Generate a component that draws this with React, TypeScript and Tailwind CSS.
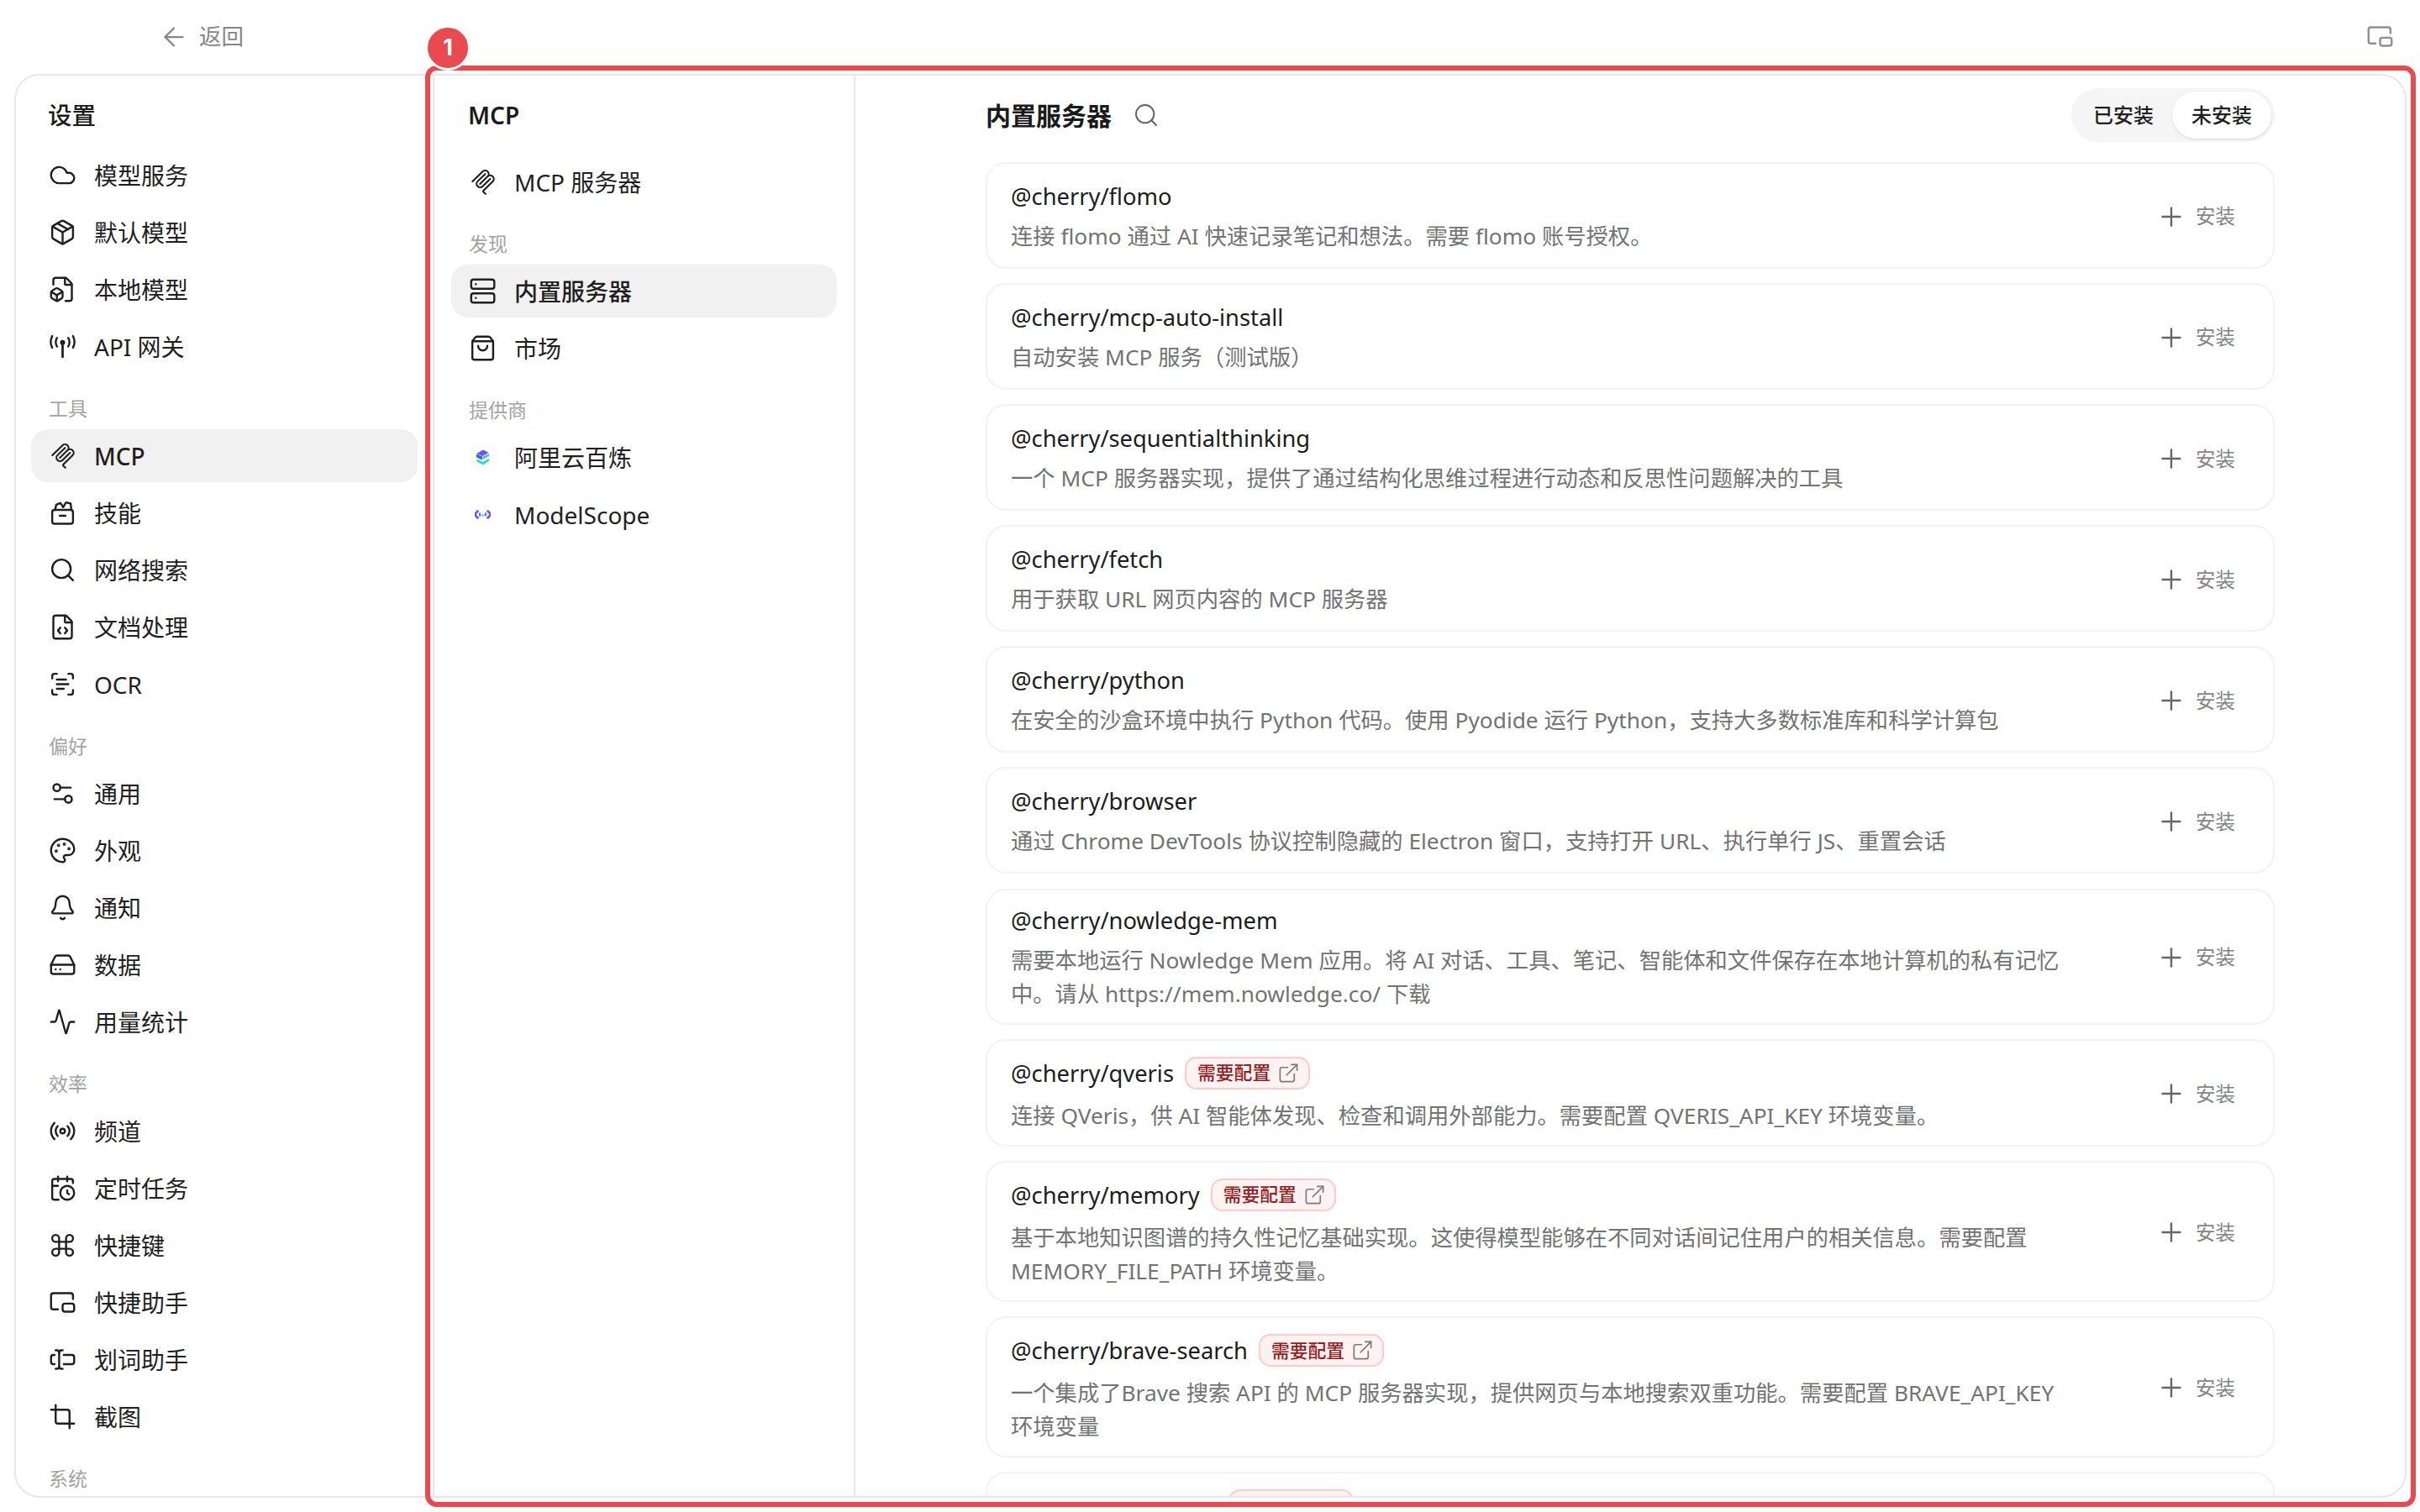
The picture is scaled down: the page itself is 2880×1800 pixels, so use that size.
import {
  Activity, ArrowLeft, Bell, CalendarClock, Cloud, Command, Crop, ExternalLink, FileBox, FileCode, HardDrive,
  Package, Palette, PictureInPicture2, Plus, Radio, ScanText, Search, Server, Settings2,
  ShoppingBag, TextCursorInput,
} from "lucide-react";
import type { ReactNode } from "react";

type IconProps = { size?: number; strokeWidth?: number };

function McpIcon({ size = 30 }: IconProps) {
  return (
    <svg width={size} height={size} viewBox="0 0 24 24" fill="currentColor" fillRule="evenodd">
      <path d="M15.688 2.343a2.588 2.588 0 00-3.61 0l-9.626 9.44a.863.863 0 01-1.203 0 .823.823 0 010-1.18l9.626-9.44a4.313 4.313 0 016.016 0 4.116 4.116 0 011.204 3.54 4.3 4.3 0 013.609 1.18l.05.05a4.115 4.115 0 010 5.9l-8.706 8.537a.274.274 0 000 .393l1.788 1.754a.823.823 0 010 1.18.863.863 0 01-1.203 0l-1.788-1.753a1.92 1.92 0 010-2.754l8.706-8.538a2.47 2.47 0 000-3.54l-.05-.049a2.588 2.588 0 00-3.607-.003l-7.172 7.034-.002.002-.098.097a.863.863 0 01-1.204 0 .823.823 0 010-1.18l7.273-7.133a2.47 2.47 0 00-.003-3.537z" />
      <path d="M14.485 4.703a.823.823 0 000-1.18.863.863 0 00-1.204 0l-7.119 6.982a4.115 4.115 0 000 5.9 4.314 4.314 0 006.016 0l7.12-6.982a.823.823 0 000-1.18.863.863 0 00-1.204 0l-7.119 6.982a2.588 2.588 0 01-3.61 0 2.47 2.47 0 010-3.54l7.12-6.982z" />
    </svg>
  );
}

function SkillIcon({ size = 33, strokeWidth = 1.75 }: IconProps) {
  return (
    <svg width={size} height={size} viewBox="0 0 24 24" fill="none" stroke="currentColor" strokeWidth={strokeWidth} strokeLinecap="round" strokeLinejoin="round">
      <rect x="3" y="9.5" width="18" height="12" rx="2" />
      <path d="M9.5 14.5h5" />
      <path d="M5.5 9.5 6.5 5 10 3.5l2.5 3.5" />
      <path d="M12.5 7 15 3l4 1 .5 5.5" />
    </svg>
  );
}

function AntennaIcon({ size = 33, strokeWidth = 1.75 }: IconProps) {
  return (
    <svg width={size} height={size} viewBox="0 0 24 24" fill="none" stroke="currentColor" strokeWidth={strokeWidth} strokeLinecap="round">
      <circle cx="12" cy="8.5" r="1.3" fill="currentColor" />
      <path d="M12 9v12" strokeWidth={2} />
      <path d="M7.2 4.5a7 7 0 0 0 0 7.5" />
      <path d="M16.8 4.5a7 7 0 0 1 0 7.5" />
      <path d="M3 3a11 11 0 0 0 0 10" />
      <path d="M21 3a11 11 0 0 1 0 10" />
    </svg>
  );
}

function BailianLogo() {
  return (
    <svg width={29} height={29} viewBox="0 0 29 29">
      <path d="M15 5.5 21.5 9 14 13 7 10Z" fill="#7a4ff0" />
      <path d="M7 10.5 14 13.5V17.5L7 14.5Z" fill="#2f6bf2" />
      <path d="M14.5 13.5 22 10V13L14.5 17Z" fill="#35c6e8" />
      <path d="M7.5 16.5 14.5 20 22 16V18.5L15 23.5 7.5 19.5Z" fill="#2ed8c3" />
    </svg>
  );
}

function ModelScopeLogo() {
  return (
    <svg width={29} height={29} viewBox="0 0 29 29" fill="none" strokeLinecap="square">
      <path d="M9 10.5H7.5V12.5H6V16.5H7.5V18.5H9" stroke="#5f4bff" strokeWidth={1.8} />
      <path d="M20 10.5H21.5V12.5H23V16.5H21.5V18.5H20" stroke="#5f4bff" strokeWidth={1.8} />
      <path d="M11 13.5V15.5" stroke="#5f4bff" strokeWidth={1.8} />
      <path d="M18 13.5V15.5" stroke="#5f4bff" strokeWidth={1.8} />
      <path d="M13.5 15.5H15.5" stroke="#3bc6e0" strokeWidth={1.8} />
    </svg>
  );
}

type NavEntry = { label: string; icon: ReactNode; active?: boolean };
type NavGroup = { title?: string; items: NavEntry[] };

const ic = { size: 33, strokeWidth: 1.75 };

const settingsNav: NavGroup[] = [
  {
    items: [
      { label: "模型服务", icon: <Cloud {...ic} /> },
      { label: "默认模型", icon: <Package {...ic} /> },
      { label: "本地模型", icon: <FileBox {...ic} /> },
      { label: "API 网关", icon: <AntennaIcon /> },
    ],
  },
  {
    title: "工具",
    items: [
      { label: "MCP", icon: <McpIcon />, active: true },
      { label: "技能", icon: <SkillIcon /> },
      { label: "网络搜索", icon: <Search {...ic} /> },
      { label: "文档处理", icon: <FileCode {...ic} /> },
      { label: "OCR", icon: <ScanText {...ic} /> },
    ],
  },
  {
    title: "偏好",
    items: [
      { label: "通用", icon: <Settings2 {...ic} /> },
      { label: "外观", icon: <Palette {...ic} /> },
      { label: "通知", icon: <Bell {...ic} /> },
      { label: "数据", icon: <HardDrive {...ic} /> },
      { label: "用量统计", icon: <Activity {...ic} /> },
    ],
  },
  {
    title: "效率",
    items: [
      { label: "频道", icon: <Radio {...ic} /> },
      { label: "定时任务", icon: <CalendarClock {...ic} /> },
      { label: "快捷键", icon: <Command {...ic} /> },
      { label: "快捷助手", icon: <PictureInPicture2 {...ic} /> },
      { label: "划词助手", icon: <TextCursorInput {...ic} /> },
      { label: "截图", icon: <Crop {...ic} /> },
    ],
  },
  { title: "系统", items: [] },
];

const mcpNav: NavGroup[] = [
  { items: [{ label: "MCP 服务器", icon: <McpIcon /> }] },
  {
    title: "发现",
    items: [
      { label: "内置服务器", icon: <Server {...ic} />, active: true },
      { label: "市场", icon: <ShoppingBag {...ic} /> },
    ],
  },
  {
    title: "提供商",
    items: [
      { label: "阿里云百炼", icon: <BailianLogo /> },
      { label: "ModelScope", icon: <ModelScopeLogo /> },
    ],
  },
];

const servers: { name: string; desc: string; config?: boolean }[] = [
  { name: "@cherry/flomo", desc: "连接 flomo 通过 AI 快速记录笔记和想法。需要 flomo 账号授权。" },
  { name: "@cherry/mcp-auto-install", desc: "自动安装 MCP 服务（测试版）" },
  { name: "@cherry/sequentialthinking", desc: "一个 MCP 服务器实现，提供了通过结构化思维过程进行动态和反思性问题解决的工具" },
  { name: "@cherry/fetch", desc: "用于获取 URL 网页内容的 MCP 服务器" },
  { name: "@cherry/python", desc: "在安全的沙盒环境中执行 Python 代码。使用 Pyodide 运行 Python，支持大多数标准库和科学计算包" },
  { name: "@cherry/browser", desc: "通过 Chrome DevTools 协议控制隐藏的 Electron 窗口，支持打开 URL、执行单行 JS、重置会话" },
  { name: "@cherry/nowledge-mem", desc: "需要本地运行 Nowledge Mem 应用。将 AI 对话、工具、笔记、智能体和文件保存在本地计算机的私有记忆\n中。请从 https://mem.nowledge.co/ 下载" },
  { name: "@cherry/qveris", desc: "连接 QVeris，供 AI 智能体发现、检查和调用外部能力。需要配置 QVERIS_API_KEY 环境变量。", config: true },
  { name: "@cherry/memory", desc: "基于本地知识图谱的持久性记忆基础实现。这使得模型能够在不同对话间记住用户的相关信息。需要配置\nMEMORY_FILE_PATH 环境变量。", config: true },
  { name: "@cherry/brave-search", desc: "一个集成了Brave 搜索 API 的 MCP 服务器实现，提供网页与本地搜索双重功能。需要配置 BRAVE_API_KEY\n环境变量", config: true },
  { name: "@cherry/filesystem", desc: "实现文件系统操作的模型上下文协议（MCP）服务器", config: true },
];

function NavList({ groups }: { groups: NavGroup[] }) {
  return (
    <div className="flex flex-col gap-[5px]">
      {groups.map((g, i) => (
        <div key={i} className="flex flex-col gap-[5px]">
          {g.title && (
            <div className="mt-[22px] mb-[5px] flex h-[30px] items-center pl-[21px] text-[23px] text-[#a3a3a3]">{g.title}</div>
          )}
          {g.items.map((item) => (
            <div
              key={item.label}
              className={`flex h-[63px] items-center gap-[21px] rounded-[20px] pl-[21px] text-[28px] text-[#1f1f1f] ${item.active ? "bg-[#f1f1f1] font-medium" : ""}`}
            >
              <span className="flex size-[33px] shrink-0 items-center justify-center">{item.icon}</span>
              <span className="whitespace-nowrap">{item.label}</span>
            </div>
          ))}
        </div>
      ))}
    </div>
  );
}

function ServerCard({ name, desc, config }: { name: string; desc: string; config?: boolean }) {
  return (
    <div className="flex min-h-[127px] shrink-0 items-center rounded-[24px] border-2 border-[#f3f3f3] pt-[18px] pr-[45px] pb-[15px] pl-[28px]">
      <div className="min-w-0 flex-1">
        <div className={`mb-[9px] flex items-center gap-[13px] ${config ? "h-[42px]" : "h-[36px]"}`}>
          <span className="text-[27.3px] leading-[36px] whitespace-nowrap text-[#1c1c1c]">{name}</span>
          {config && (
            <span className="flex h-[39px] w-[149px] items-center gap-[8px] rounded-[14px] border-2 border-[#fecaca] bg-[#fef2f2] pl-[13px] text-[21.8px] font-medium text-[#991b1b]">
              需要配置
              <ExternalLink size={27} strokeWidth={1.5} className="shrink-0 text-[#7a7a7a]" />
            </span>
          )}
        </div>
        <div className="text-[26.3px] leading-[40px] whitespace-pre-line text-[#737373]">{desc}</div>
      </div>
      <div className="flex shrink-0 items-center gap-[11px] text-[23.5px] text-[#858585]">
        <Plus size={36} strokeWidth={1.6} className="text-[#666666]" />
        安装
      </div>
    </div>
  );
}

export default function App() {
  return (
    <div className="relative flex h-[1800px] w-[2880px] flex-col overflow-hidden bg-white font-['Noto_Sans','Noto_Sans_CJK_SC',sans-serif]">
      <header className="flex h-[88px] shrink-0 items-center justify-between pr-[31px] pb-[1px] pl-[189px]">
        <div className="flex items-center gap-[12px] text-[26.5px] text-[#858585]">
          <ArrowLeft size={36} strokeWidth={1.5} />
          返回
        </div>
        <PictureInPicture2 size={33} strokeWidth={1.75} className="text-[#8f8f8f]" />
      </header>

      <div className="ml-[17px] flex h-[1695px] w-[2847px] overflow-hidden rounded-[30px] border-2 border-[#e8e8e8]">
        <aside className="w-[498px] shrink-0 border-r-2 border-[#e8e8e8] px-[18px]">
          <div className="mt-[27px] mb-[20px] h-[40px] pl-[20px] text-[28.5px] leading-[40px] font-medium text-[#1a1a1a]">设置</div>
          <NavList groups={settingsNav} />
        </aside>

        <aside className="w-[501px] shrink-0 border-r-2 border-[#e8e8e8] px-[20px]">
          <div className="mt-[27px] mb-[28px] h-[40px] pl-[20px] text-[28px] leading-[40px] font-semibold text-[#1a1a1a]">MCP</div>
          <NavList groups={mcpNav} />
        </aside>

        <main className="flex min-w-0 flex-1 flex-col px-[155px] pt-[15px]">
          <div className="mb-[24px] flex h-[64px] shrink-0 items-center justify-between">
            <div className="flex items-center gap-[25px]">
              <span className="text-[30px] font-semibold text-[#1a1a1a]">内置服务器</span>
              <Search size={32} strokeWidth={1.5} className="text-[#666666]" />
            </div>
            <div className="flex h-[64px] items-center rounded-full bg-[#f5f5f5] px-[4px] text-[24px] font-medium text-[#1f1f1f]">
              <div className="flex h-[56px] w-[116px] items-center justify-center">已安装</div>
              <div className="flex h-[56px] w-[118px] items-center justify-center rounded-full bg-white shadow-sm">未安装</div>
            </div>
          </div>
          <div className="flex flex-col gap-[17.1px]">
            {servers.map((s) => (
              <ServerCard key={s.name} {...s} />
            ))}
          </div>
        </main>
      </div>

      {/* annotation frame over the panel */}
      <div className="pointer-events-none absolute top-[78px] left-[506px] h-[1716px] w-[2369px] rounded-[14px] border-[6px] border-[#e84a50]" />
      <div className="absolute top-[30px] left-[506px] flex size-[54px] items-center justify-center rounded-full border-[3px] border-white bg-[#e84a50] font-['Inter',sans-serif] text-[27px] font-bold text-white">
        1
      </div>
    </div>
  );
}
